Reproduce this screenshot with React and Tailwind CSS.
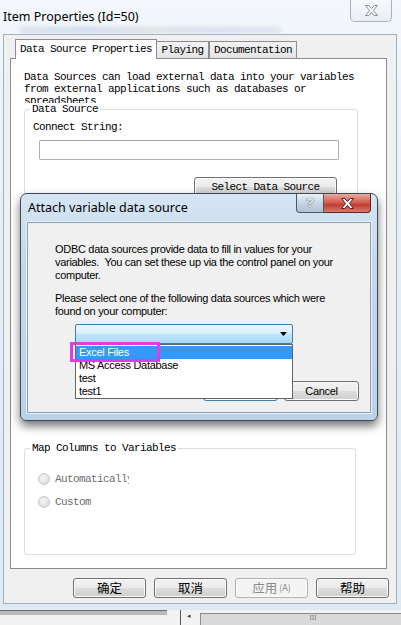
import React from "react";

const MONO = "font-['Liberation_Mono',monospace] text-[11px] tracking-[-0.6px]";
const UI = "font-['Liberation_Sans',Arial,sans-serif] text-[11px] tracking-[-0.3px]";

function WinButton({ children, className = "", disabled = false, primary = false }) {
  const look = disabled
    ? "border-[#adb2b5] bg-[#f4f4f4] text-[#8a8a8a]"
    : primary
    ? "border-[#3c7fb1] bg-[linear-gradient(#eaf6fd_0%,#d9f0fc_49%,#bee6fd_50%,#a7d9f5_100%)] text-black shadow-[0_0_3px_#2f6f8f]"
    : "border-[#707070] bg-[linear-gradient(#f2f2f2_0%,#ebebeb_49%,#dddddd_50%,#cfcfcf_100%)] text-black";
  return (
    <div
      className={`flex h-[20px] items-center justify-center rounded-[3px] border shadow-[inset_0_0_0_1px_#fbfbfb] ${look} ${className}`}
    >
      {children}
    </div>
  );
}

function CrossIcon({ fill, stroke, className }) {
  return (
    <svg viewBox="0 0 13 11" width="13" height="11" className={className}>
      <polygon
        points="0.5,0.5 3.8,0.5 6.5,3.6 9.2,0.5 12.5,0.5 8.4,5.5 12.5,10.5 9.2,10.5 6.5,7.4 3.8,10.5 0.5,10.5 4.6,5.5"
        fill={fill}
        stroke={stroke}
        strokeWidth="1"
        strokeLinejoin="round"
      />
    </svg>
  );
}

function Radio({ label, width }) {
  return (
    <div className="flex h-[13px] items-center">
      <span className="h-[12px] w-[12px] rounded-full border border-[#c9c9c9] bg-[radial-gradient(circle_at_40%_40%,#f4f4f4,#d8d8d8)]" />
      <span
        className={`ml-[5px] overflow-hidden whitespace-nowrap leading-[12px] text-[#6d6d6d] ${MONO}`}
        style={width ? { width } : undefined}
      >
        {label}
      </span>
    </div>
  );
}

export default function App() {
  return (
    <div className="relative h-[625px] w-[401px] overflow-hidden bg-[#eef2f6]">
      {/* Item Properties window */}
      <div className="flex h-[610px] flex-col bg-[linear-gradient(180deg,#f3f7fb_0%,#e6eef6_40%,#dfe9f3_100%)]">
        <div className="relative flex h-[34px] items-start">
          <div className="pl-[3px] pt-[9px] font-['Noto_Sans',sans-serif] text-[12.5px] leading-[16px] text-black">
            Item Properties (Id=50)
          </div>
          <div className="absolute left-[20px] right-[120px] top-[27px] h-[6px] bg-[linear-gradient(90deg,#c6d3e0,#b7c6e6,#cbd6d2,#c5cbe6,#d0d8e6)] opacity-60 blur-[2px]" />
          <div className="ml-auto mr-[9px] flex h-[22px] w-[42px] items-center justify-center rounded-b-[5px] border border-t-0 border-[#a8b3bf] bg-[linear-gradient(#f7f9fb,#e8eef4)]">
            <CrossIcon fill="#ffffff" stroke="#8a8f96" />
          </div>
        </div>

        <div className="ml-[3px] flex h-[570px] w-[394px] flex-col border border-[#a3afbb] bg-[#f0f0f0]">
          {/* tabs */}
          <div className={`ml-[11px] mt-[4px] flex h-[19px] items-start ${MONO} text-black`}>
            <div className="relative z-10 flex h-[20px] w-[142px] items-center justify-center border border-b-0 border-[#898c95] bg-white">
              Data Source Properties
            </div>
            <div className="mt-[2px] flex h-[17px] w-[52px] items-center justify-center border border-b-0 border-l-0 border-[#898c95] bg-[linear-gradient(#f4f4f4,#e3e3e3)]">
              Playing
            </div>
            <div className="mt-[2px] flex h-[17px] w-[88px] items-center justify-center border border-b-0 border-[#898c95] bg-[linear-gradient(#f4f4f4,#e3e3e3)]">
              Documentation
            </div>
          </div>

          {/* tab panel */}
          <div className={`ml-[6px] flex h-[511px] w-[377px] flex-col border border-[#898c95] bg-white ${MONO} text-black`}>
            <div className="ml-[13px] mt-[12px] h-[32px] overflow-hidden leading-[12px]">
              Data Sources can load external data into your variables
              <br />
              from external applications such as databases or
              <br />
              spreadsheets
            </div>

            <fieldset className="ml-[13px] h-[314px] w-[334px] rounded-[3px] border border-[#d5dfe5]">
              <legend className="ml-[5px] bg-white px-[2px] leading-[12px]">Data Source</legend>
              <div className="ml-[8px] mt-[6px] leading-[12px]">Connect String:</div>
              <div className="ml-[14px] mt-[7px] h-[20px] w-[300px] rounded-[2px] border border-[#abadb3] border-t-[#a0a4ab] bg-white" />
              <WinButton className="ml-[169px] mt-[17px] w-[143px]">Select Data Source</WinButton>
            </fieldset>

            <fieldset className="ml-[13px] mt-[25px] h-[113px] w-[332px] rounded-[3px] border border-[#d5dfe5]">
              <legend className="ml-[5px] bg-white px-[2px] leading-[12px]">Map Columns to Variables</legend>
              <div className="ml-[13px] mt-[18px]">
                <Radio label="Automatically" width={74} />
              </div>
              <div className="ml-[13px] mt-[10px]">
                <Radio label="Custom" />
              </div>
            </fieldset>
          </div>

          {/* bottom buttons */}
          <div className="mt-[9px] flex justify-end gap-[8px] pr-[7px] font-['Noto_Sans_CJK_SC',sans-serif] text-[12.5px]">
            <WinButton className="w-[73px]">确定</WinButton>
            <WinButton className="w-[73px]">取消</WinButton>
            <WinButton className="w-[73px]" disabled>
              应用<span className="ml-[2px] text-[9px]">(A)</span>
            </WinButton>
            <WinButton className="w-[73px]">帮助</WinButton>
          </div>
        </div>
      </div>

      {/* background app strip */}
      <div className="flex h-[15px] items-start bg-[#f2f2f2]">
        <div className="h-[5px] w-[167px] border-t border-[#6b6b6b] bg-[#b9b9b9]" />
        <div className="ml-[13px] h-[15px] w-[20px] border-l border-[#555] pl-[6px] text-[7px] leading-[12px] text-[#444]">◂</div>
        <div className="mt-[3px] flex h-[12px] flex-1 items-start justify-center border-l border-t border-[#8e8e8e] bg-[#d9d9d9] pl-[24px] text-[7px] leading-[8px] text-[#777]">
          III
        </div>
      </div>

      {/* Attach variable data source dialog */}
      <div className="absolute left-[20px] top-[193px] flex h-[228px] w-[358px] flex-col rounded-b-[6px] rounded-t-[7px] border border-[#3f4955] bg-[linear-gradient(180deg,#d6e5f3_0%,#c4d8ec_30%,#bcd2e9_100%)] shadow-[0_5px_10px_rgba(0,0,0,0.55)]">
        <div className="flex h-[28px] items-start">
          <div className="pl-[7px] pt-[6px] font-['Noto_Sans',sans-serif] text-[12.5px] leading-[16px] text-black">
            Attach variable data source
          </div>
          <div className="ml-auto mr-[6px] flex">
            <div className="flex h-[19px] w-[28px] items-center justify-center rounded-bl-[4px] border border-t-0 border-[#4d5866] bg-[linear-gradient(#e9f0f7,#c7d4e2_50%,#b3c3d5)] font-['Liberation_Sans',sans-serif] text-[13px] font-bold text-[#eef3f8] [text-shadow:0_0_1px_#4a5562,0_0_1px_#4a5562]">
              ?
            </div>
            <div className="flex h-[19px] w-[47px] items-center justify-center rounded-br-[4px] border border-l-0 border-t-0 border-[#5a2a27] bg-[linear-gradient(#e9a99f,#d1584b_50%,#c13d30_60%,#d97a6c)]">
              <CrossIcon fill="#ffffff" stroke="#5a2020" />
            </div>
          </div>
        </div>

        <div className={`ml-[6px] flex h-[191px] w-[344px] flex-col border border-[#8aa0b6] bg-[#f0f0f0] shadow-[0_0_0_1px_#e8f0f8] ${UI} text-black`}>
          <div className="ml-[27px] mt-[20px] whitespace-pre leading-[13px]">
            {"ODBC data sources provide data to fill in values for your\nvariables.  You can set these up via the control panel on your\ncomputer."}
          </div>
          <div className="ml-[27px] mt-[10px] whitespace-pre leading-[13px]">
            {"Please select one of the following data sources which were\nfound on your computer:"}
          </div>

          <div className="relative ml-[47px] mt-[6px] w-[218px]">
            <div className="flex h-[20px] items-center justify-end rounded-[2px] border border-[#3c7fb1] bg-[linear-gradient(#eaf6fd_0%,#d9f0fc_49%,#bee6fd_50%,#a7d9f5_100%)] pr-[5px]">
              <svg viewBox="0 0 7 4" width="7" height="4">
                <polygon points="0,0 7,0 3.5,4" fill="#000" />
              </svg>
            </div>
            <div className="absolute left-0 top-full z-20 flex h-[55px] w-[218px] flex-col border border-[#646464] bg-white pt-[1px] leading-[13px]">
              <div className="h-[13px] bg-[#3399ff] pl-[3px] text-white">Excel Files</div>
              <div className="h-[13px] pl-[3px]">MS Access Database</div>
              <div className="h-[13px] pl-[3px]">test</div>
              <div className="h-[13px] pl-[3px]">test1</div>
              <div className="absolute left-[-6px] top-[-3px] h-[20px] w-[90px] border-[3px] border-[#e03ce0]" />
            </div>
          </div>

          <div className="mt-[37px] flex justify-end gap-[6px] pr-[11px]">
            <WinButton className="w-[75px]" primary>OK</WinButton>
            <WinButton className="w-[75px]">Cancel</WinButton>
          </div>
        </div>
      </div>
    </div>
  );
}
